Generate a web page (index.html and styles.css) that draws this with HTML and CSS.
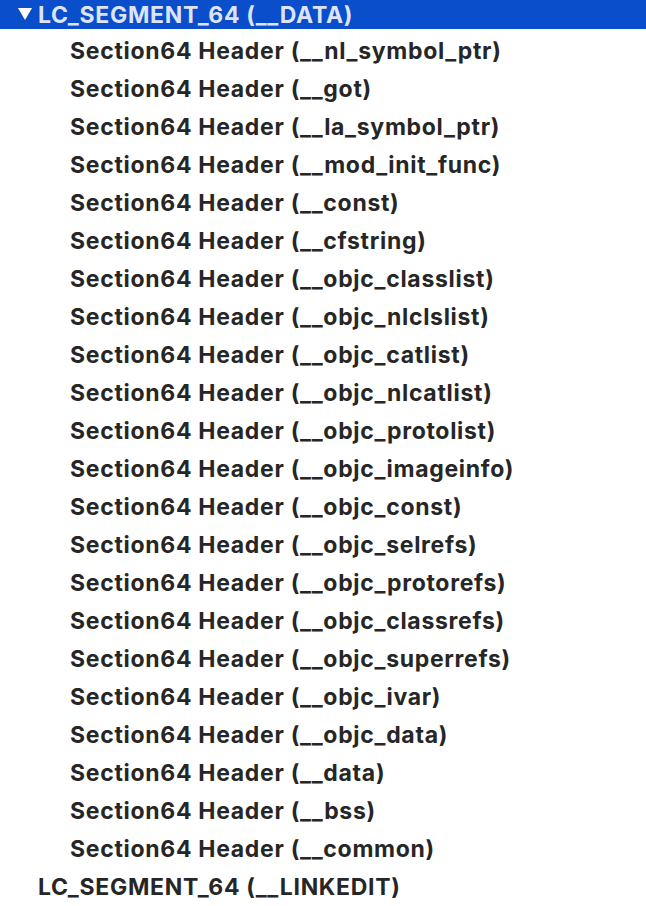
FILE: index.html
```html
<!DOCTYPE html>
<html>
<head>
<meta charset="utf-8">
<link rel="stylesheet" href="styles.css">
</head>
<body>
<div class="tree">
  <div class="row selected">
    <span class="disclosure"><svg width="14" height="13" viewBox="0 0 14 13"><polygon points="0,0 14,0 7,12" fill="currentColor"/></svg></span>
    <span class="label">LC_SEGMENT_64 (__DATA)</span>
  </div>
  <div class="children">
    <div class="row child"><span class="label">Section64 Header (__nl_symbol_ptr)</span></div>
    <div class="row child"><span class="label">Section64 Header (__got)</span></div>
    <div class="row child"><span class="label">Section64 Header (__la_symbol_ptr)</span></div>
    <div class="row child"><span class="label">Section64 Header (__mod_init_func)</span></div>
    <div class="row child"><span class="label">Section64 Header (__const)</span></div>
    <div class="row child"><span class="label">Section64 Header (__cfstring)</span></div>
    <div class="row child"><span class="label">Section64 Header (__objc_classlist)</span></div>
    <div class="row child"><span class="label">Section64 Header (__objc_nlclslist)</span></div>
    <div class="row child"><span class="label">Section64 Header (__objc_catlist)</span></div>
    <div class="row child"><span class="label">Section64 Header (__objc_nlcatlist)</span></div>
    <div class="row child"><span class="label">Section64 Header (__objc_protolist)</span></div>
    <div class="row child"><span class="label">Section64 Header (__objc_imageinfo)</span></div>
    <div class="row child"><span class="label">Section64 Header (__objc_const)</span></div>
    <div class="row child"><span class="label">Section64 Header (__objc_selrefs)</span></div>
    <div class="row child"><span class="label">Section64 Header (__objc_protorefs)</span></div>
    <div class="row child"><span class="label">Section64 Header (__objc_classrefs)</span></div>
    <div class="row child"><span class="label">Section64 Header (__objc_superrefs)</span></div>
    <div class="row child"><span class="label">Section64 Header (__objc_ivar)</span></div>
    <div class="row child"><span class="label">Section64 Header (__objc_data)</span></div>
    <div class="row child"><span class="label">Section64 Header (__data)</span></div>
    <div class="row child"><span class="label">Section64 Header (__bss)</span></div>
    <div class="row child"><span class="label">Section64 Header (__common)</span></div>
    <div class="row top"><span class="label">LC_SEGMENT_64 (__LINKEDIT)</span></div>
  </div>
</div>
</body>
</html>
```
FILE: styles.css
```css
html, body {
  margin: 0;
  padding: 0;
  background: #ffffff;
}
.tree {
  font-family: Inter, "Noto Sans", sans-serif;
  font-weight: 700;
  font-size: 23px;
  letter-spacing: 0.7px;
  color: #262626;
  width: 646px;
  height: 906px;
  overflow: hidden;
}
.row {
  display: flex;
  align-items: center;
  height: 38px;
  white-space: nowrap;
}
.row.selected {
  height: 29px;
  background: #0b4ecb;
  color: #dce4f6;
  padding-left: 18px;
  margin-bottom: 3px;
}
.disclosure {
  display: flex;
  width: 20px;
  color: #ffffff;
}
.row.child {
  padding-left: 70px;
}
.row.top {
  padding-left: 38px;
}
```
